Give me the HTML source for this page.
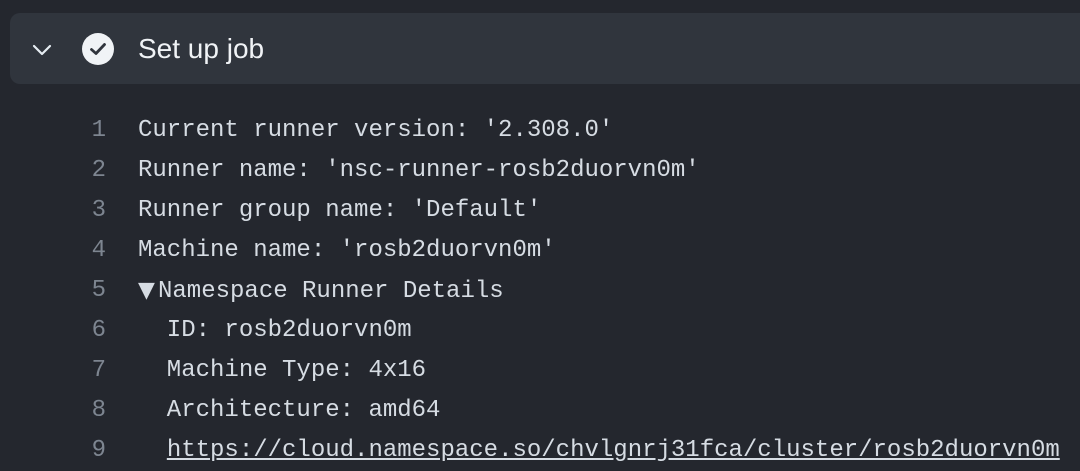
<!DOCTYPE html>
<html><head><style>
html,body{margin:0;padding:0;background:#24272e;width:1080px;height:470px;overflow:hidden}
.hdr{position:absolute;left:10px;top:13px;width:1090px;height:71px;background:#30353d;border-radius:10px}
.title{position:absolute;left:138px;top:32px;font:28px "Liberation Sans",sans-serif;color:#f0f3f6;line-height:34px}
.ln{position:absolute;left:0;width:106px;text-align:right;font:24px "Liberation Mono",monospace;color:#7d8590;line-height:40px}
.tx{position:absolute;left:138px;font:24px "Liberation Mono",monospace;color:#d6dce3;line-height:40px;white-space:pre}
a{color:#d6dce3;text-decoration:underline}
.tri{display:inline-block;width:20px;font-size:22px;font-family:"DejaVu Sans",sans-serif}
</style></head><body>
<div class="hdr"></div>
<svg style="position:absolute;left:30px;top:38px" width="24" height="24" viewBox="0 0 24 24"><path d="M4 8 L12 16 L20 8" fill="none" stroke="#e6edf3" stroke-width="2.2" stroke-linecap="round" stroke-linejoin="round"/></svg>
<svg style="position:absolute;left:82px;top:33px" width="32" height="32" viewBox="0 0 32 32"><circle cx="16" cy="16" r="16" fill="#f0f3f6"/><path d="M9.5 16.5 L14 20.5 L22.5 11.5" fill="none" stroke="#30353d" stroke-width="2.8" stroke-linecap="round" stroke-linejoin="round"/></svg>
<div class="title">Set up job</div>
<div class="ln" style="top:111px">1</div><div class="tx" style="top:111px">Current runner version: '2.308.0'</div>
<div class="ln" style="top:151px">2</div><div class="tx" style="top:151px">Runner name: 'nsc-runner-rosb2duorvn0m'</div>
<div class="ln" style="top:191px">3</div><div class="tx" style="top:191px">Runner group name: 'Default'</div>
<div class="ln" style="top:231px">4</div><div class="tx" style="top:231px">Machine name: 'rosb2duorvn0m'</div>
<div class="ln" style="top:271px">5</div><div class="tx" style="top:271px"><span class="tri">▼</span>Namespace Runner Details</div>
<div class="ln" style="top:311px">6</div><div class="tx" style="top:311px">  ID: rosb2duorvn0m</div>
<div class="ln" style="top:351px">7</div><div class="tx" style="top:351px">  Machine Type: 4x16</div>
<div class="ln" style="top:391px">8</div><div class="tx" style="top:391px">  Architecture: amd64</div>
<div class="ln" style="top:431px">9</div><div class="tx" style="top:431px">  <a>https://cloud.namespace.so/chvlgnrj31fca/cluster/rosb2duorvn0m</a></div>
</body></html>
